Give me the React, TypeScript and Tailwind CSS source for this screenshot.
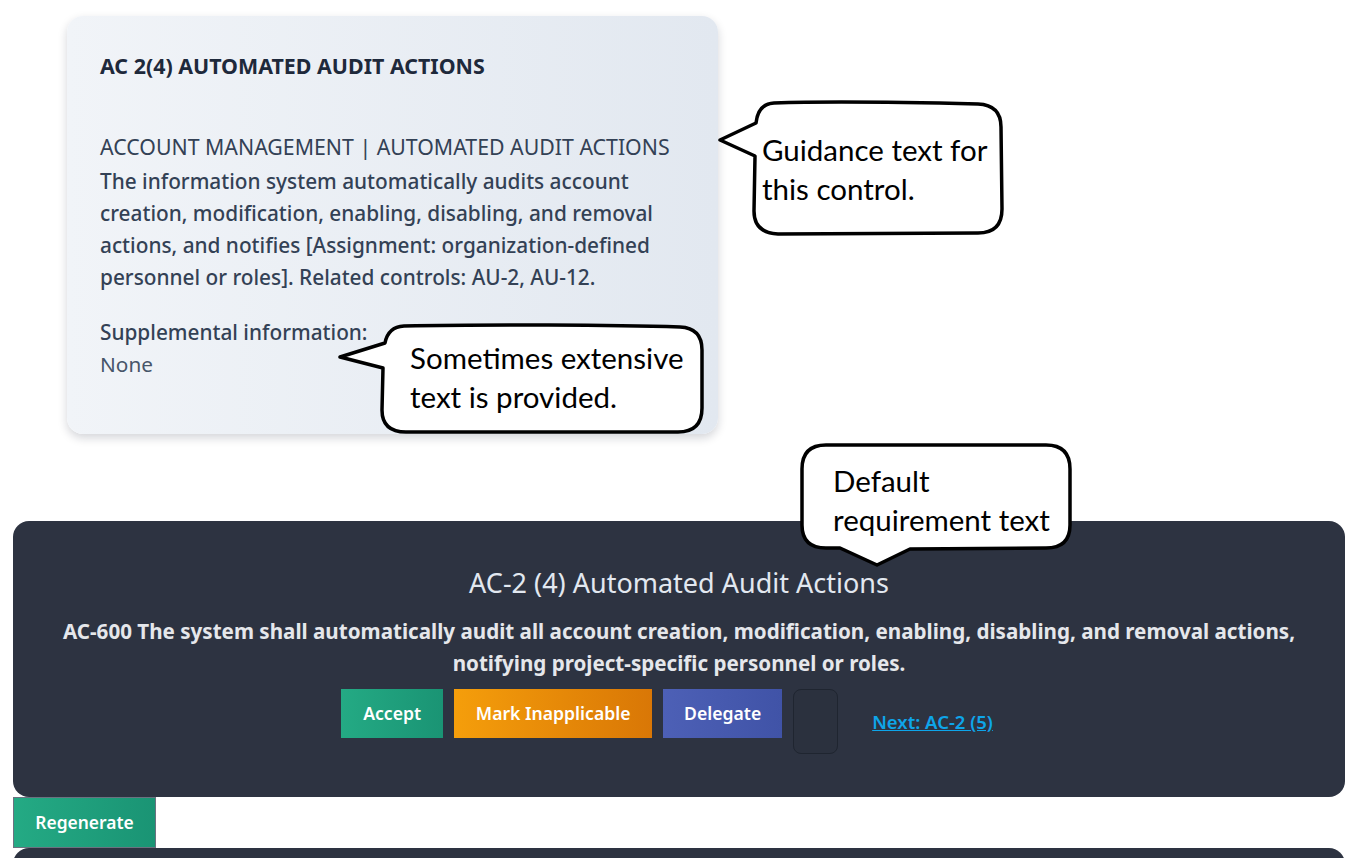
import React from 'react';

const pageFont = { fontFamily: '"Noto Sans", "Open Sans", sans-serif' };
const calloutFont = { fontFamily: 'Lato, "Open Sans", sans-serif' };

function Callout({ className, w, h, d, textClass, lines }: {
  className: string;
  w: number;
  h: number;
  d: string;
  textClass: string;
  lines: string[];
}) {
  return (
    <div className={`absolute ${className}`}>
      <svg width={w} height={h} viewBox={`0 0 ${w} ${h}`} className="absolute inset-0">
        <path d={d} fill="white" stroke="black" strokeWidth="3.5" strokeLinejoin="round" />
      </svg>
      <div className={`absolute text-[29.5px] leading-[39px] text-black whitespace-nowrap ${textClass}`} style={calloutFont}>
        {lines.map(l => (
          <div key={l}>{l}</div>
        ))}
      </div>
    </div>
  );
}

export default function App() {
  return (
    <div className="relative min-h-[858px] bg-white overflow-hidden flex flex-col pt-[16px]" style={pageFont}>
      {/* Control guidance card */}
      <div className="ml-[67px] w-[651px] h-[418px] rounded-2xl bg-gradient-to-r from-[#f1f4f8] to-[#e2e8f0] shadow-[0_4px_10px_rgba(15,23,42,0.18)] px-[33px] pt-[36px] flex flex-col">
        <h2 className="text-[21.4px] leading-7 font-bold text-[#1e293b] whitespace-nowrap">
          AC 2(4) AUTOMATED AUDIT ACTIONS
        </h2>
        <p className="mt-[51px] text-[21.3px] leading-8 text-[#334155] whitespace-nowrap">
          ACCOUNT MANAGEMENT | AUTOMATED AUDIT ACTIONS
        </p>
        <p className="mt-[2px] text-[20.8px] leading-8 font-medium text-[#334155]">
          The information system automatically audits account creation, modification, enabling, disabling, and removal
          actions, and notifies [Assignment: organization-defined personnel or roles]. Related controls: AU-2, AU-12.
        </p>
        <p className="mt-[23px] text-[20.8px] leading-8 font-medium text-[#334155]">Supplemental information:</p>
        <p className="text-[20.8px] leading-8 text-[#475569]">None</p>
      </div>

      {/* Requirement card */}
      <div className="ml-[13px] mr-[9px] mt-[87px] h-[276px] rounded-2xl bg-[#2d3341] pt-[44px] flex flex-col items-center text-center">
        <h3 className="text-[27px] leading-9 text-[#e2e8f0]">AC-2 (4) Automated Audit Actions</h3>
        <p className="mt-[14px] px-[40px] text-[20.6px] leading-8 font-bold text-[#e5e7eb]">
          AC-600 The system shall automatically audit all account creation, modification, enabling, disabling, and removal
          actions, notifying project-specific personnel or roles.
        </p>
        <div className="mt-[10px] flex items-start gap-[11px] mr-[24px]">
          <button className="w-[102px] h-[49px] bg-gradient-to-r from-[#24aa84] to-[#1a9474] text-white text-[17.6px] font-semibold">
            Accept
          </button>
          <button className="w-[198px] h-[49px] bg-gradient-to-r from-[#f59e0b] to-[#d97706] text-white text-[17.6px] font-semibold">
            Mark Inapplicable
          </button>
          <button className="w-[119px] h-[49px] bg-gradient-to-r from-[#4d60b6] to-[#4053a7] text-white text-[17.6px] font-semibold">
            Delegate
          </button>
          <div className="w-[45px] h-[65px] rounded-lg border border-[#1f2530] bg-[#2b313e]" />
          <div className="h-[65px] ml-[23px] flex items-center">
            <a href="#" className="text-[18.5px] font-semibold text-[#0ea5e9] underline">
              Next: AC-2 (5)
            </a>
          </div>
        </div>
      </div>

      <button className="ml-[13px] w-[143px] h-[51px] border border-[#6b7280] bg-gradient-to-r from-[#24aa84] to-[#1a9474] text-white text-[17.4px] font-semibold">
        Regenerate
      </button>

      <div className="ml-[13px] mr-[9px] h-[40px] rounded-t-2xl bg-[#2d3341]" />

      <Callout
        className="left-[716px] top-[99px] w-[290px] h-[139px]"
        w={290}
        h={139}
        d="M 58 4 C 120 2, 220 4, 262 5 Q 285 6 285 28 L 286 110 Q 286 134 262 134 L 62 135 Q 38 134 38 112 L 39 57 L 4 41 L 40 24 Q 42 5 58 4 Z"
        textClass="left-[46px] top-[31px]"
        lines={['Guidance text for', 'this control.']}
      />
      <Callout
        className="left-[336px] top-[322px] w-[370px] h-[114px]"
        w={370}
        h={114}
        d="M 68 4 C 150 2, 280 3, 344 5 Q 366 6 366 28 L 366 86 Q 366 110 342 110 L 70 110 Q 46 110 46 88 L 47 46 L 4 35 L 49 21 Q 52 5 68 4 Z"
        textClass="left-[74px] top-[16px]"
        lines={['Sometimes extensive', 'text is provided.']}
      />
      <Callout
        className="left-[798px] top-[441px] w-[276px] h-[128px]"
        w={276}
        h={128}
        d="M 28 4 L 248 4 Q 272 4 272 28 L 272 84 Q 272 107 248 107 L 112 108 L 79 124 L 42 107 L 28 107 Q 4 107 4 84 L 4 28 Q 4 4 28 4 Z"
        textClass="left-[35px] top-[20px]"
        lines={['Default', 'requirement text']}
      />
    </div>
  );
}
